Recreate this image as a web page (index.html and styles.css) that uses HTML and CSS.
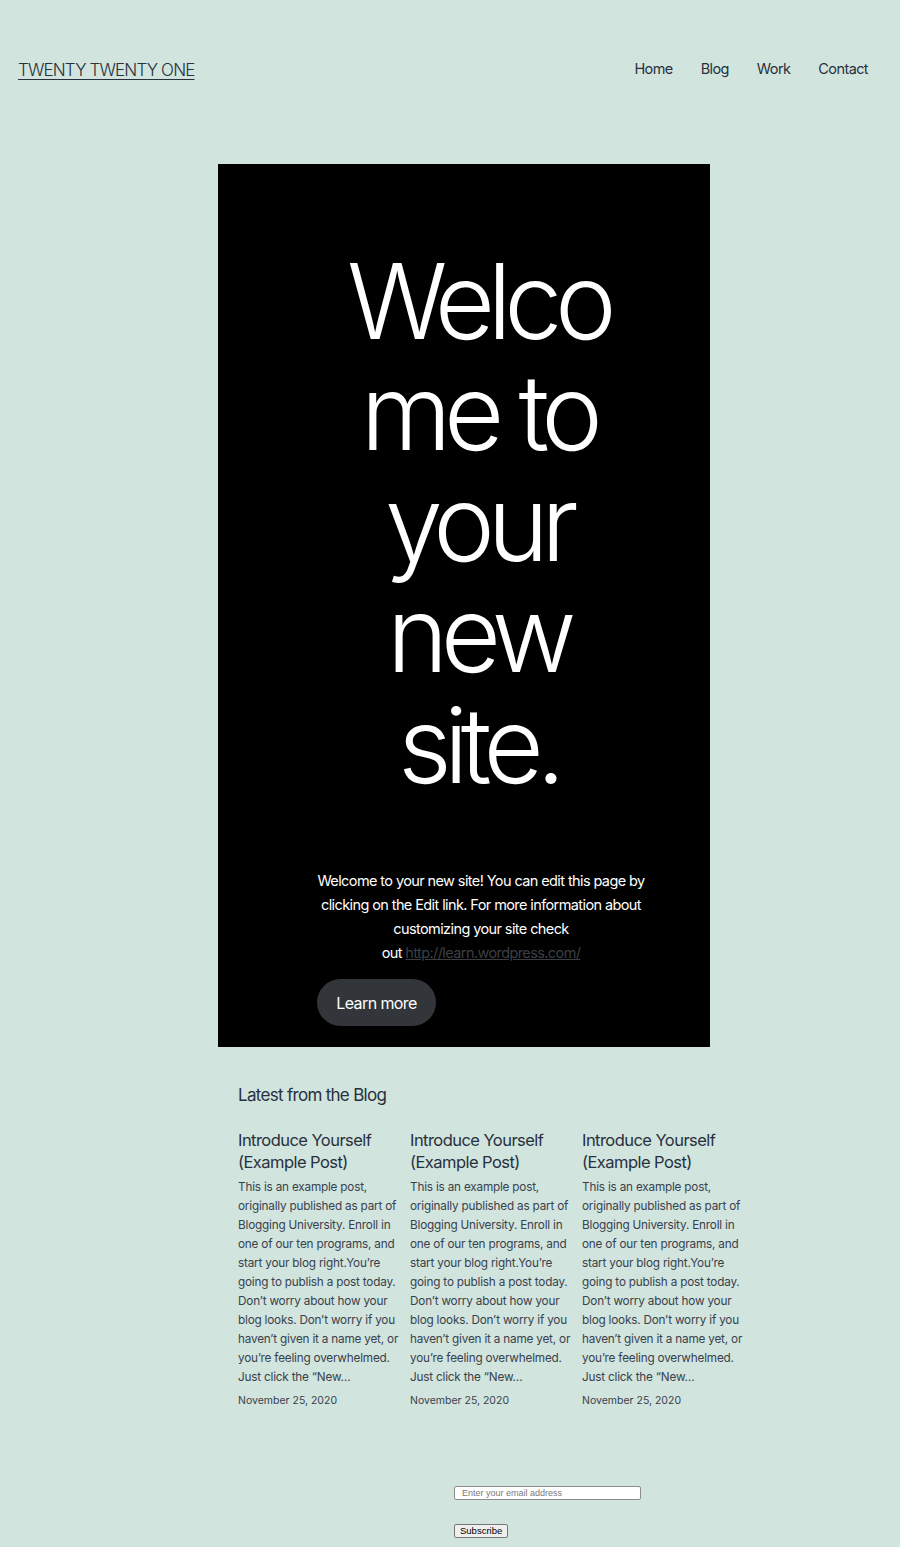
FILE: index.html
```html
<!DOCTYPE html>
<html lang="en">
<head>
<meta charset="utf-8">
<title>Twenty Twenty One</title>
<link rel="stylesheet" href="styles.css">
</head>
<body>
<header class="site-header">
  <a class="site-title" href="#">TWENTY TWENTY ONE</a>
  <nav class="site-nav">
    <a href="#">Home</a>
    <a href="#">Blog</a>
    <a href="#">Work</a>
    <a href="#">Contact</a>
  </nav>
</header>

<main class="main">
  <section class="hero">
    <div class="hero-inner">
      <h1 class="hero-title">Welco<br>me to<br>your<br>new<br>site.</h1>
      <p class="hero-text">Welcome to your new site! You can edit this page by clicking on the Edit link. For more information about customizing your site check out&nbsp;<a href="#" class="hero-link">http://learn.wordpress.com/</a></p>
      <a href="#" class="hero-btn">Learn more</a>
    </div>
  </section>

  <section class="blog">
    <h2 class="blog-heading">Latest from the Blog</h2>
    <div class="posts">
      <article class="post">
        <h3 class="post-title">Introduce Yourself (Example Post)</h3>
        <p class="post-excerpt">This is an example post, originally published as part of Blogging University. Enroll in one of our ten programs, and start your blog right.You’re going to publish a post today. Don’t worry about how your blog looks. Don’t worry if you haven’t given it a name yet, or you’re feeling overwhelmed. Just click the “New…</p>
        <div class="post-date">November 25, 2020</div>
      </article>
      <article class="post">
        <h3 class="post-title">Introduce Yourself (Example Post)</h3>
        <p class="post-excerpt">This is an example post, originally published as part of Blogging University. Enroll in one of our ten programs, and start your blog right.You’re going to publish a post today. Don’t worry about how your blog looks. Don’t worry if you haven’t given it a name yet, or you’re feeling overwhelmed. Just click the “New…</p>
        <div class="post-date">November 25, 2020</div>
      </article>
      <article class="post">
        <h3 class="post-title">Introduce Yourself (Example Post)</h3>
        <p class="post-excerpt">This is an example post, originally published as part of Blogging University. Enroll in one of our ten programs, and start your blog right.You’re going to publish a post today. Don’t worry about how your blog looks. Don’t worry if you haven’t given it a name yet, or you’re feeling overwhelmed. Just click the “New…</p>
        <div class="post-date">November 25, 2020</div>
      </article>
    </div>
  </section>

  <form class="subscribe">
    <input class="email" type="email" placeholder="Enter your email address">
    <button class="sub-btn" type="button">Subscribe</button>
  </form>
</main>
</body>
</html>
```

FILE: styles.css
```css
html, body {
  margin: 0;
  padding: 0;
}
body {
  background: #d1e4dd;
  color: #28303d;
  font-family: Inter, "Noto Sans", sans-serif;
}
a { color: inherit; }

.site-header {
  display: flex;
  justify-content: space-between;
  align-items: center;
  padding: 58px 32px 0 18px;
  height: 22px;
}
.site-title {
  font-size: 17px;
  font-weight: 300;
  letter-spacing: -0.85px;
  text-decoration: underline;
  text-underline-offset: 3px;
  text-decoration-thickness: 1px;
  margin-top: 2px;
}
.site-nav {
  display: flex;
  gap: 28px;
  font-size: 14.5px;
  letter-spacing: -0.6px;
  margin-top: -2px;
}
.site-nav a {
  text-decoration: none;
}

.main {
  display: flex;
  flex-direction: column;
  align-items: flex-start;
  padding: 84px 0 0 218px;
}

.hero {
  width: 492px;
  height: 883px;
  box-sizing: border-box;
  background: #000;
  color: #fff;
  padding: 82px 65px 0 99px;
}
.hero-inner {
  display: flex;
  flex-direction: column;
}
.hero-title {
  margin: 0;
  padding-right: 6px;
  font-weight: 300;
  font-size: 104px;
  line-height: 111px;
  letter-spacing: -7.5px;
  text-align: center;
}
.hero-text {
  margin: 68px 0 0;
  font-size: 14.5px;
  line-height: 24px;
  letter-spacing: -0.6px;
  text-align: center;
}
.hero-link {
  color: #3b3f44;
  text-decoration: underline;
}
.hero-btn {
  align-self: flex-start;
  margin-top: 14px;
  width: 119px;
  height: 47px;
  border-radius: 24px;
  background: #323539;
  color: #fff;
  text-decoration: none;
  display: flex;
  align-items: center;
  justify-content: center;
  font-size: 16px;
  letter-spacing: -0.6px;
}

.blog {
  margin-left: 20px;
  margin-top: 36px;
}
.blog-heading {
  margin: 0;
  font-weight: 400;
  font-size: 17px;
  line-height: 24px;
  letter-spacing: -0.7px;
}
.posts {
  display: grid;
  grid-template-columns: repeat(3, 162px);
  column-gap: 10px;
  margin-top: 22px;
}
.post-title {
  margin: 0;
  font-weight: 400;
  font-size: 16.5px;
  line-height: 22px;
  letter-spacing: -0.55px;
}
.post-excerpt {
  margin: 5px 0 0;
  font-size: 11.75px;
  line-height: 19px;
  letter-spacing: -0.2px;
  color: #39414d;
}
.post-date {
  margin-top: 6px;
  font-size: 10.5px;
  line-height: 16px;
  color: #39414d;
}

.subscribe {
  display: flex;
  flex-direction: column;
  align-items: flex-start;
  margin-left: 236px;
  margin-top: 77px;
  gap: 24px;
}
.email {
  width: 187px;
  height: 14px;
  box-sizing: border-box;
  font-family: "Liberation Sans", Arial, sans-serif;
  font-size: 9px;
  padding: 0 7px;
  border: 1px solid #8a8f8d;
  border-radius: 2px;
  background: #fff;
}
.email::placeholder { color: #7a7a7a; }
.sub-btn {
  height: 14px;
  padding: 0 5px;
  font-family: "Liberation Sans", Arial, sans-serif;
  font-size: 9.5px;
  line-height: 12px;
  border: 1px solid #767676;
  border-radius: 2px;
  background: #efefef;
  color: #000;
}
```
